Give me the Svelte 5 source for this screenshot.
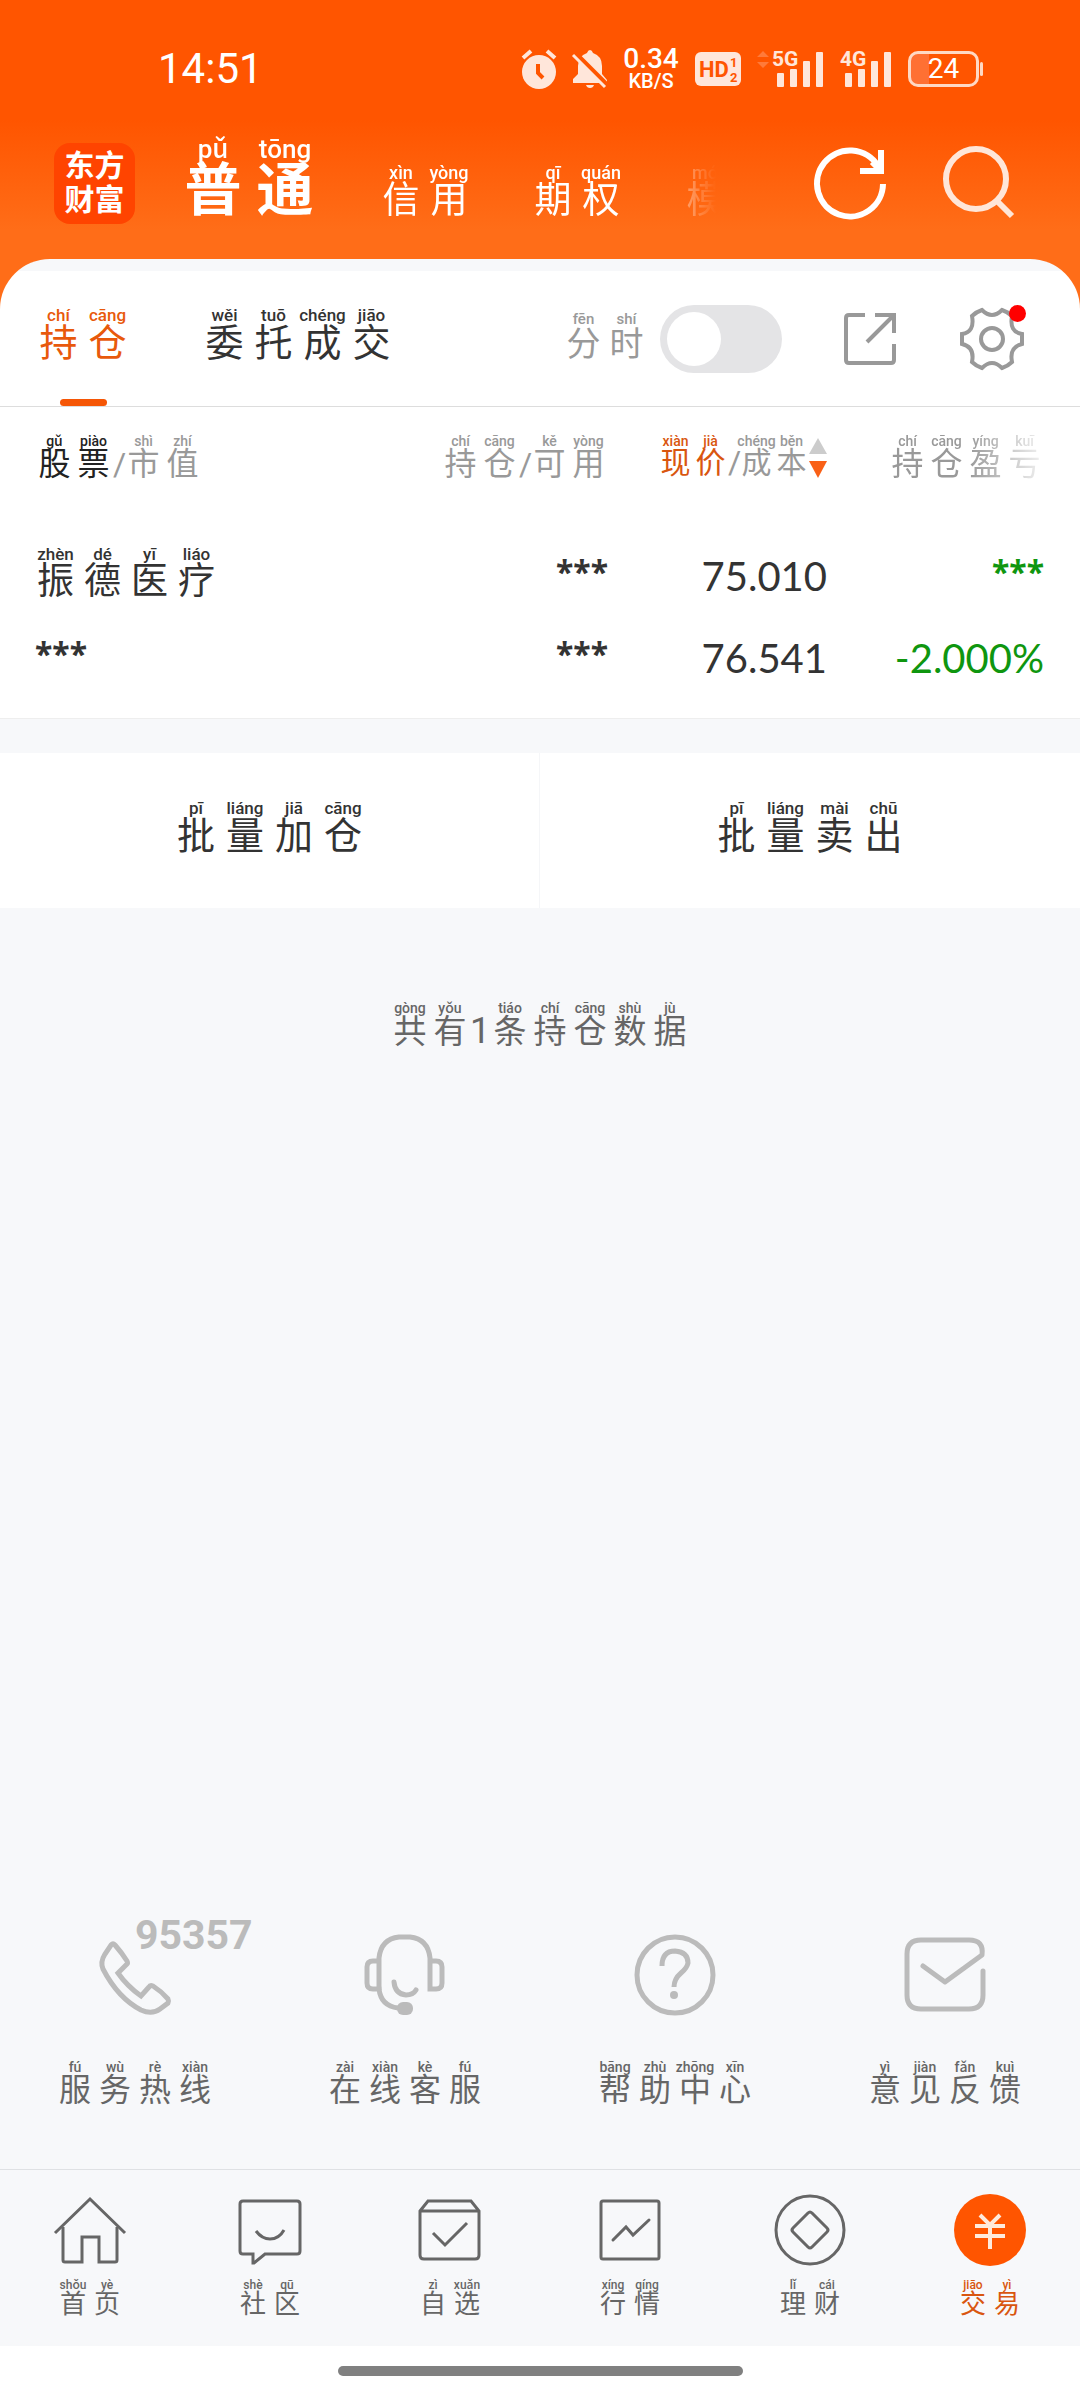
<script>
	let activeTop = $state('pu');
	let activeTab = $state('chicang');
	let activeNav = $state('jiaoyi');
	let fenshi = $state(false);

	const topTabs = [
		{ id: 'pu', hanzi: '普通', pinyin: 'pǔ tōng' },
		{ id: 'xinyong', hanzi: '信用', pinyin: 'xìn yòng' },
		{ id: 'qiquan', hanzi: '期权', pinyin: 'qī quán' },
		{ id: 'moni', hanzi: '模拟', pinyin: 'mó nǐ' }
	];

	const tabs = [
		{ id: 'chicang', hanzi: '持仓', pinyin: 'chí cāng' },
		{ id: 'weituo', hanzi: '委托成交', pinyin: 'wěi tuō chéng jiāo' }
	];

	const services = [
		{ icon: 'phone', hanzi: '服务热线', pinyin: 'fú wù rè xiàn' },
		{ icon: 'headset', hanzi: '在线客服', pinyin: 'zài xiàn kè fú' },
		{ icon: 'help', hanzi: '帮助中心', pinyin: 'bāng zhù zhōng xīn' },
		{ icon: 'mail', hanzi: '意见反馈', pinyin: 'yì jiàn fǎn kuì' }
	];

	const navItems = [
		{ id: 'shouye', hanzi: '首页', pinyin: 'shǒu yè' },
		{ id: 'shequ', hanzi: '社区', pinyin: 'shè qū' },
		{ id: 'zixuan', hanzi: '自选', pinyin: 'zì xuǎn' },
		{ id: 'hangqing', hanzi: '行情', pinyin: 'xíng qíng' },
		{ id: 'licai', hanzi: '理财', pinyin: 'lǐ cái' },
		{ id: 'jiaoyi', hanzi: '交易', pinyin: 'jiāo yì' }
	];

	// pairs every character with its reading
	const pair = (hanzi, pinyin) => {
		const readings = pinyin.split(' ');
		return [...hanzi].map((char, i) => ({ char, reading: readings[i] }));
	};
</script>

{#snippet py(hanzi, pinyin)}
	<span class="py">
		{#each pair(hanzi, pinyin) as { char, reading }}
			<span class="zi"><small>{reading}</small><span class="char">{char}</span></span>
		{/each}
	</span>
{/snippet}

{#snippet signal(label)}
	<svg class="signal" width="52" height="40" viewBox="0 0 52 40">
		<text x="0" y="17" font-size="21">{label}</text>
		<rect x="5" y="24" width="7" height="14" rx="1" />
		<rect x="18" y="20" width="7" height="18" rx="1" />
		<rect x="31" y="12" width="7" height="26" rx="1" />
		<rect x="44" y="3" width="7" height="35" rx="1" />
	</svg>
{/snippet}

<div class="app">
	<div class="top">
		<div class="status">
			<span class="clock">14:51</span>
			<div class="status-icons">
				<svg width="36" height="40" viewBox="0 0 36 40">
					<circle cx="18" cy="23" r="17" fill="#ffe6da" />
					<path d="M2 9L10 2M34 9L26 2" stroke="#ffe6da" stroke-width="4" />
					<path d="M17 15V24L22 29" fill="none" stroke="#f50" stroke-width="4" />
				</svg>
				<svg width="34" height="40" viewBox="0 0 34 40">
					<path
						d="M17 1Q19 1 20 4Q29 7 29 17V25L34 31V34H0V30L5 25V17Q5 7 14 4Q15 1 17 1ZM13 36H21Q20 39 17 39Q14 39 13 36Z"
						fill="#ffe6da"
					/>
					<path d="M2 4L35 37" stroke="#f50" stroke-width="5" />
					<path d="M0 6L32 38" stroke="#ffe6da" stroke-width="3" />
				</svg>
				<div class="speed"><b>0.34</b><span>KB/S</span></div>
				<svg class="hd" width="46" height="34" viewBox="0 0 46 34">
					<rect width="46" height="34" rx="6" fill="#ffe6da" />
					<text x="4" y="25" font-size="22">HD</text>
					<text x="35" y="15" font-size="13">1</text>
					<text x="35" y="30" font-size="13">2</text>
				</svg>
				<div class="mobile">
					<svg width="12" height="40" viewBox="0 0 12 40">
						<path d="M6 2L12 8H0ZM6 19L0 13H12Z" fill="#ff7a3a" />
					</svg>
					{@render signal('5G')}
				</div>
				{@render signal('4G')}
				<div class="battery"><span class="level">24</span></div>
			</div>
		</div>

		<header class="head">
			<div class="logo"><span>东方</span><span>财富</span></div>
			<nav class="top-tabs">
				{#each topTabs as tab}
					<button class:active={activeTop === tab.id} onclick={() => (activeTop = tab.id)}>
						{@render py(tab.hanzi, tab.pinyin)}
					</button>
				{/each}
			</nav>
			<button class="head-btn" aria-label="刷新">
				<svg width="72" height="72" viewBox="0 0 72 72" fill="none" stroke="#fff" stroke-width="6">
					<path d="M69 37A33 33 0 1 1 64 19" />
					<path d="M67 3V24H46" />
					<path d="M58 15L67 24" />
				</svg>
			</button>
			<button class="head-btn" aria-label="搜索">
				<svg width="72" height="72" viewBox="0 0 72 72" fill="none" stroke="#ffe6d8" stroke-width="6">
					<circle cx="33" cy="32" r="30" />
					<path d="M53 53L69 69" />
				</svg>
			</button>
		</header>

		<main class="panel">
			<div class="tabs">
				{#each tabs as tab}
					<button class="tab" class:active={activeTab === tab.id} onclick={() => (activeTab = tab.id)}>
						{@render py(tab.hanzi, tab.pinyin)}
					</button>
				{/each}
				<label class="fenshi">
					{@render py('分时', 'fēn shí')}
					<input type="checkbox" bind:checked={fenshi} />
				</label>
				<button class="share" aria-label="分享">
					<svg width="52" height="52" viewBox="0 0 52 52" fill="none" stroke="#999" stroke-width="4">
						<path d="M21 2H5Q2 2 2 5V47Q2 50 5 50H47Q50 50 50 47V31" />
						<path d="M31 2H50V20M49 3L23 29" />
					</svg>
				</button>
				<button class="gear" aria-label="设置">
					<svg width="64" height="64" viewBox="0 0 64 64" fill="none" stroke="#999" stroke-width="4">
						<path
							d="M22 3Q32 13 42 3Q48 5 52 9Q49 25 62 27V37Q49 40 52 55Q48 59 42 61Q32 51 22 61Q16 59 12 55Q15 40 2 37V27Q15 25 12 9Q16 5 22 3Z"
						/>
						<circle cx="32" cy="32" r="11" />
					</svg>
					<i class="dot"></i>
				</button>
			</div>

			<table>
				<colgroup>
					<col />
					<col class="c-hold" />
					<col class="c-price" />
					<col class="c-profit" />
				</colgroup>
				<thead>
					<tr>
						<th><div class="th"><b>{@render py('股票', 'gǔ piào')}</b><i>/</i>{@render py('市值', 'shì zhí')}</div></th>
						<th><div class="th">{@render py('持仓', 'chí cāng')}<i>/</i>{@render py('可用', 'kě yòng')}</div></th>
						<th>
							<div class="th small">
								<b class="sorted">{@render py('现价', 'xiàn jià')}</b><i>/</i>{@render py('成本', 'chéng běn')}
								<svg width="18" height="40" viewBox="0 0 18 40">
									<path d="M9 0L18 16H0Z" fill="#ccc" />
									<path d="M9 40L0 23H18Z" fill="#f96016" />
								</svg>
							</div>
						</th>
						<th><div class="th fade">{@render py('持仓盈亏', 'chí cāng yíng kuī')}</div></th>
					</tr>
				</thead>
				<tbody>
					<tr>
						<td class="name">{@render py('振德医疗', 'zhèn dé yī liáo')}</td>
						<td class="mask">***</td>
						<td>75.010</td>
						<td class="mask down">***</td>
					</tr>
					<tr>
						<td class="mask">***</td>
						<td class="mask">***</td>
						<td>76.541</td>
						<td class="down">-2.000%</td>
					</tr>
				</tbody>
			</table>
		</main>
	</div>

	<div class="actions">
		<button>{@render py('批量加仓', 'pī liáng jiā cāng')}</button>
		<button>{@render py('批量卖出', 'pī liáng mài chū')}</button>
	</div>

	<p class="count">
		{@render py('共有', 'gòng yǒu')}<span class="num">1</span>{@render py('条持仓数据', 'tiáo chí cāng shù jù')}
	</p>

	<div class="services">
		{#each services as item}
			<a href="#{item.icon}">
				<svg width="82" height="82" viewBox="0 0 82 82" fill="none" stroke="#bbb" stroke-width="5">
					{#if item.icon === 'phone'}
						<path
							d="M17 11Q19 9 21 11Q28 19 33 27Q34 29 33 30L24 39Q33 52 47 62L55 53Q56 51 59 52Q67 57 74 65Q75 67 74 69L66 75Q58 81 47 76Q24 64 9 35Q6 28 11 20Z"
						/>
					{:else if item.icon === 'headset'}
						<path d="M15 56V24Q17 5 35 3H46Q64 5 66 24V55H72Q78 55 78 49V33Q78 27 72 27H67" />
						<path d="M15 27H9Q3 27 3 33V49Q3 55 9 55H15Q17 72 34 74" />
						<path d="M30 48Q31 60 42 61Q49 61 52 56" stroke-linecap="round" />
						<rect x="33" y="68" width="16" height="13" rx="6" fill="#bbb" stroke="none" />
					{:else if item.icon === 'help'}
						<circle cx="41" cy="41" r="38" />
						<path d="M28 32Q28 17 41 17Q54 18 54 29Q53 34 47 39Q40 45 40 53" />
						<circle cx="40" cy="61" r="4" fill="#bbb" stroke="none" />
					{:else}
						<path
							d="M19 32L41 48L78 21Q80 6 65 6H17Q3 6 3 20V61Q3 75 17 75H65Q79 75 79 61V37"
							stroke-linecap="round"
							stroke-linejoin="round"
						/>
					{/if}
				</svg>
				{#if item.icon === 'phone'}<span class="hotline">95357</span>{/if}
				{@render py(item.hanzi, item.pinyin)}
			</a>
		{/each}
	</div>

	<nav class="bottom-nav">
		{#each navItems as item}
			<button class:active={activeNav === item.id} onclick={() => (activeNav = item.id)}>
				<svg width="72" height="72" viewBox="0 0 72 72" fill="none" stroke="#666" stroke-width="3">
					{#if item.id === 'shouye'}
						<path d="M1 39L36 5L71 39" />
						<path d="M9 33V66Q9 68 11 68H28V43H45V68H61Q63 68 63 66V33" />
					{:else if item.id === 'shequ'}
						<path d="M9 7H63Q66 7 66 10V57Q66 60 63 60H31L20 69H19V60H9Q6 60 6 57V10Q6 7 9 7Z" />
						<path d="M22 37Q28 45 36 45Q45 45 50 36" />
					{:else if item.id === 'zixuan'}
						<path d="M6 17L14 7H57L65 17V61Q65 65 61 65H10Q6 65 6 61ZM6 17H65" />
						<path d="M19 39L31 51L53 29" />
					{:else if item.id === 'hangqing'}
						<rect x="7" y="7" width="58" height="58" rx="2" />
						<path d="M19 46L32 33L39 41L55 26" stroke-linecap="round" />
					{:else if item.id === 'licai'}
						<circle cx="36" cy="36" r="34" />
						<path d="M34 19Q36 17 38 19L53 34Q55 36 53 38L38 53Q36 55 34 53L19 38Q17 36 19 34Z" />
					{:else}
						<circle cx="36" cy="36" r="36" fill="#f50" stroke="none" />
						<path d="M26 21L36 31L46 21M21 32H51M21 42H51M36 31V55" stroke="#ffeadc" stroke-width="4" />
					{/if}
				</svg>
				{@render py(item.hanzi, item.pinyin)}
			</button>
		{/each}
	</nav>
	<div class="home-bar"><i></i></div>
</div>

<style>
	:global(body) {
		margin: 0;
		background: #f7f8fa;
	}

	.app {
		display: flex;
		flex-direction: column;
		min-height: 100vh;
		font-family: Roboto, 'Noto Sans CJK SC', sans-serif;
		color: #333;
	}

	button {
		padding: 0;
		border: none;
		background: none;
		font: inherit;
		color: inherit;
		cursor: pointer;
	}

	svg {
		display: block;
		flex: none;
		overflow: visible;
	}

	/* characters with pinyin above */
	.py {
		display: inline-flex;
	}

	.zi {
		display: flex;
		flex-direction: column;
		align-items: center;
		width: var(--cell);
		white-space: nowrap;
	}

	.zi small {
		font-size: var(--pinyin);
		line-height: 1;
		font-weight: 500;
	}

	.char {
		font-size: var(--hanzi);
		line-height: 1;
	}

	.top {
		background: linear-gradient(#ff5500 120px, #ff6d18 230px);
	}

	/* status bar */
	.status {
		display: flex;
		align-items: center;
		justify-content: space-between;
		height: 137px;
		padding: 0 97px 0 158px;
		color: #fff;
	}

	.clock {
		font-size: 42px;
	}

	.status-icons {
		display: flex;
		align-items: center;
		gap: 16px;
	}

	.speed {
		display: flex;
		flex-direction: column;
		align-items: center;
		width: 56px;
		line-height: 20px;
		font-size: 20px;
		font-weight: 500;
	}

	.speed b {
		font-size: 28px;
		font-weight: 500;
		line-height: 24px;
	}

	.hd text {
		fill: #f50;
		font-weight: bold;
	}

	.mobile {
		display: flex;
		gap: 3px;
	}

	.signal {
		fill: #ffe6da;
		font-weight: bold;
	}

	.battery {
		position: relative;
		box-sizing: border-box;
		width: 71px;
		height: 36px;
		margin-right: 4px;
		border: 3px solid #ffd9c4;
		border-radius: 10px;
		text-align: center;
		font-size: 28px;
		line-height: 30px;
		background: linear-gradient(90deg, #ff7033 18px, transparent 18px);
	}

	.battery::after {
		content: '';
		position: absolute;
		top: 8px;
		right: -7px;
		width: 3px;
		height: 14px;
		background: #ffd9c4;
		border-radius: 2px;
	}

	/* header */
	.head {
		display: flex;
		align-items: center;
		height: 92px;
		padding: 0 65px 30px 54px;
		color: #fff;
	}

	.logo {
		display: flex;
		flex-direction: column;
		justify-content: center;
		align-items: center;
		width: 81px;
		height: 81px;
		margin-right: 42px;
		border-radius: 16px;
		background: #ff4400;
		font-size: 30px;
		font-weight: bold;
		line-height: 34px;
	}

	.top-tabs {
		display: flex;
		align-items: flex-end;
		flex: 1;
		gap: 56px;
		min-width: 0;
		padding: 6px 0 18px;
		overflow: hidden;
		mask-image: linear-gradient(90deg, #000 calc(100% - 80px), transparent);
		--cell: 48px;
		--hanzi: 37px;
		--pinyin: 18px;
	}

	.top-tabs button {
		flex: none;
		line-height: 0;
	}

	.top-tabs .active {
		font-weight: bold;
		--cell: 72px;
		--hanzi: 57px;
		--pinyin: 26px;
	}

	.head-btn {
		margin-left: 57px;
	}

	.top-tabs + .head-btn {
		margin-left: 98px;
	}

	/* white panel */
	.panel {
		border-radius: 50px 50px 0 0;
		background: linear-gradient(#f7f8fa 12px, #fff 12px);
		padding-top: 12px;
		border-bottom: 1px solid #eee;
	}

	.tabs {
		display: flex;
		align-items: center;
		height: 135px;
		padding: 0 56px 0 34px;
		border-bottom: 1px solid #ddd;
		--cell: 49px;
		--hanzi: 38px;
		--pinyin: 17px;
	}

	.tab {
		position: relative;
		box-sizing: border-box;
		display: flex;
		align-items: center;
		height: 100%;
		margin-right: 68px;
		padding-bottom: 8px;
	}

	.tab.active {
		color: #e8590c;
	}

	.tab.active::after {
		content: '';
		position: absolute;
		left: 26px;
		bottom: 0;
		width: 47px;
		height: 7px;
		border-radius: 4px;
		background: #f55606;
	}

	.fenshi {
		display: flex;
		align-items: center;
		gap: 12px;
		margin-left: auto;
		color: #999;
		--cell: 43px;
		--hanzi: 34px;
		--pinyin: 15px;
	}

	.fenshi .py {
		padding-bottom: 4px;
	}

	.fenshi input {
		appearance: none;
		width: 122px;
		height: 68px;
		margin: 0;
		padding: 7px;
		border-radius: 34px;
		background: #e4e4e6;
	}

	.fenshi input::before {
		content: '';
		display: block;
		width: 54px;
		height: 54px;
		border-radius: 50%;
		background: #fff;
	}

	.fenshi input:checked {
		background: #f50;
	}

	.fenshi input:checked::before {
		margin-left: auto;
	}

	.share {
		margin: 0 64px 0 62px;
	}

	.gear {
		position: relative;
	}

	.dot {
		position: absolute;
		top: -2px;
		right: -2px;
		width: 17px;
		height: 17px;
		border-radius: 50%;
		background: #f00;
	}

	/* holdings */
	table {
		width: 100%;
		table-layout: fixed;
		border-collapse: collapse;
		margin-bottom: 19px;
		--cell: 39px;
		--hanzi: 32px;
		--pinyin: 14px;
	}

	.c-hold {
		width: 220px;
	}

	.c-price {
		width: 219px;
	}

	.c-profit {
		width: 253px;
	}

	th {
		height: 101px;
		padding: 27px 0 0;
		vertical-align: top;
		font-weight: normal;
		color: #999;
	}

	.th {
		display: flex;
		align-items: flex-end;
		justify-content: flex-end;
	}

	.th b {
		display: flex;
		font-weight: normal;
		color: #222;
	}

	.th i {
		width: 11px;
		text-align: center;
		font-style: normal;
		font-size: 32px;
		line-height: 32px;
	}

	.th.small {
		--cell: 35px;
		--hanzi: 30px;
	}

	.th .sorted {
		color: #d9560f;
	}

	.th.fade {
		mask-image: linear-gradient(90deg, #000 65%, transparent 105%);
	}

	td {
		height: 82px;
		padding: 0;
		text-align: right;
		font-family: Lato, Roboto, sans-serif;
		font-size: 40px;
		line-height: 48px;
	}

	th:first-child .th {
		justify-content: flex-start;
	}

	th:first-child,
	td:first-child {
		padding-left: 35px;
		text-align: left;
	}

	th:last-child,
	td:last-child {
		padding-right: 36px;
	}

	td.name {
		padding: 0 0 6px 32px;
		height: 76px;
		font-family: inherit;
		line-height: 0;
		--cell: 47px;
		--hanzi: 37px;
		--pinyin: 17px;
	}

	.mask {
		height: 74px;
		padding-bottom: 8px;
		font-family: 'Noto Sans', sans-serif;
		font-size: 32px;
		font-weight: bold;
	}

	.down {
		color: #0f960f;
	}

	/* batch buttons */
	.actions {
		display: grid;
		grid-template-columns: 1fr 1fr;
		margin-top: 34px;
		background: #fff;
		--cell: 49px;
		--hanzi: 38px;
		--pinyin: 17px;
	}

	.actions button {
		height: 155px;
		padding-bottom: 8px;
	}

	.actions button:first-child {
		border-right: 1px solid #f5f6f8;
	}

	.count {
		display: flex;
		align-items: flex-end;
		justify-content: center;
		margin: 93px 0;
		color: #666;
		--cell: 40px;
		--hanzi: 33px;
		--pinyin: 14px;
	}

	.num {
		width: 20px;
		text-align: center;
		font-size: 36px;
		line-height: 34px;
	}

	/* service links */
	.services {
		display: grid;
		grid-template-columns: repeat(4, 1fr);
		margin-top: auto;
		padding-bottom: 63px;
		--cell: 40px;
		--hanzi: 32px;
		--pinyin: 14px;
	}

	.services a {
		position: relative;
		display: flex;
		flex-direction: column;
		align-items: center;
		gap: 44px;
		color: #666;
		text-decoration: none;
	}

	.hotline {
		position: absolute;
		top: -20px;
		left: 50%;
		font-size: 41px;
		font-weight: bold;
		line-height: 42px;
		color: #bbb;
	}

	/* bottom navigation */
	.bottom-nav {
		display: grid;
		grid-template-columns: repeat(6, 1fr);
		border-top: 1px solid #dfe1e4;
		padding: 24px 0 29px;
		--cell: 34px;
		--hanzi: 26px;
		--pinyin: 12px;
	}

	.bottom-nav button {
		display: flex;
		flex-direction: column;
		align-items: center;
		gap: 13px;
		color: #666;
	}

	.bottom-nav .active {
		color: #d9560f;
	}

	.home-bar {
		display: flex;
		justify-content: center;
		padding: 20px 0 24px;
		background: #fff;
	}

	.home-bar i {
		width: 405px;
		height: 10px;
		border-radius: 5px;
		background: #808080;
	}
</style>
